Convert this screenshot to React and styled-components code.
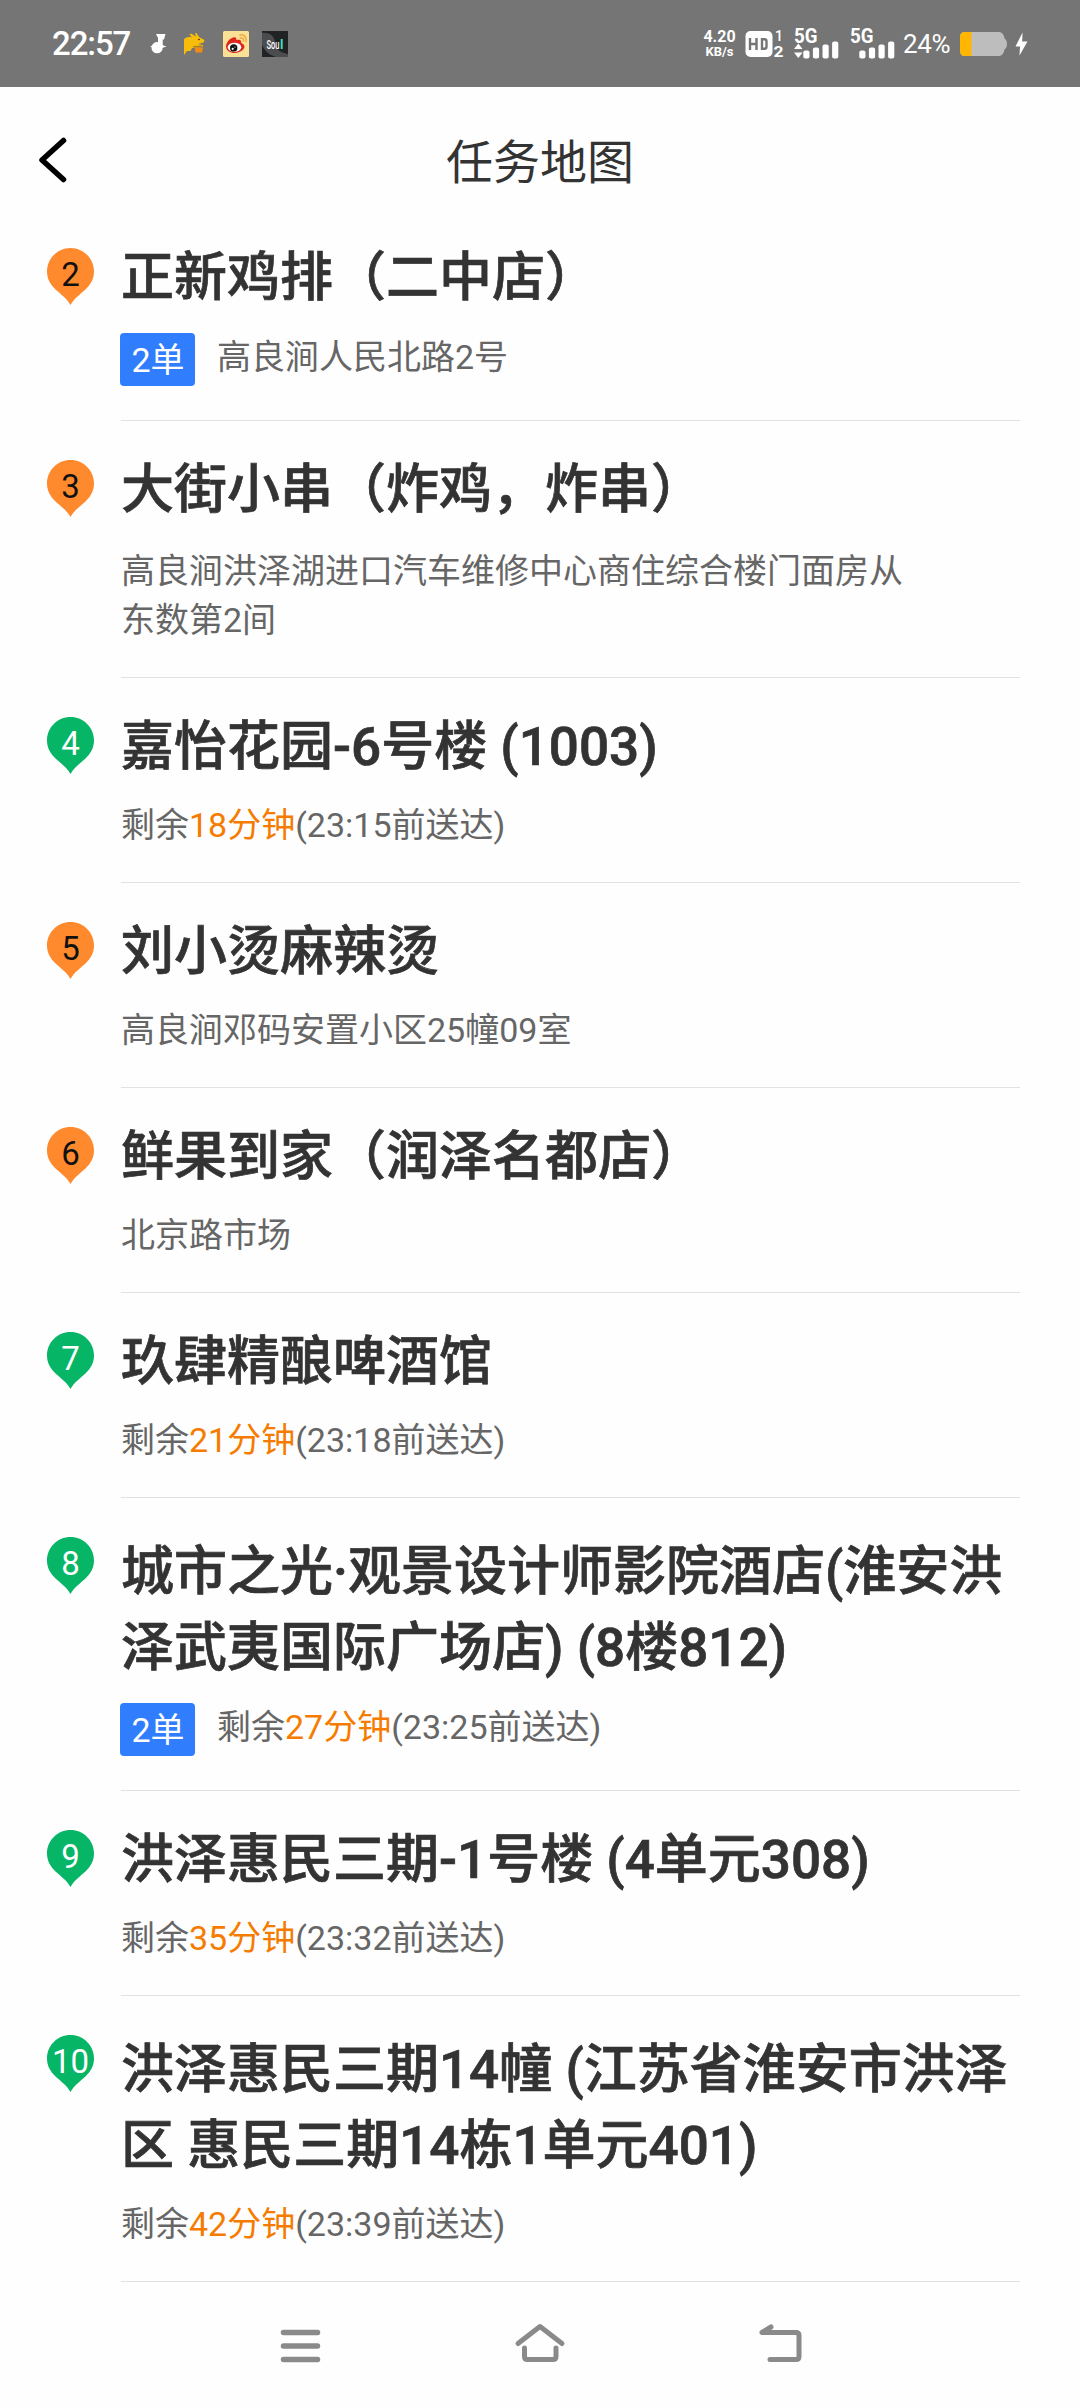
import React from 'react'
import styled, { createGlobalStyle } from 'styled-components';

const GlobalStyle = createGlobalStyle`
    body {
        margin: 0;
        background: #fefefe;
        font-family: Roboto, "Noto Sans CJK SC", sans-serif;
        color: #333;
    }
`;

const Screen = styled.div`
    width: 1080px;
    height: 2408px;
    display: flex;
    flex-direction: column;
    overflow: hidden;
`;

const StatusBar = styled.div`
    height: 87px;
    box-sizing: border-box;
    padding: 0 52px;
    display: flex;
    align-items: center;
    justify-content: space-between;
    background: #757575;
    color: #fff;
`;

const StatusGroup = styled.div`
    display: flex;
    align-items: center;
    gap: ${({gap}) => gap}px;
`;

const Clock = styled.span`
    width: 81px;
    font-size: 33px;
    font-weight: 500;
    line-height: 33px;
    letter-spacing: -1.1px;
`;

const Speed = styled.div`
    width: 35px;
    display: flex;
    flex-direction: column;
    align-items: center;
    font-size: 16px;
    font-weight: 700;
    line-height: 16px;
    & span:last-child {
        font-size: 13px;
        line-height: 13px;
    }
`;

const Percent = styled.span`
    width: 49px;
    font-size: 26px;
    line-height: 30px;
    letter-spacing: -0.3px;
`;

const Header = styled.header`
    height: 122px;
    display: grid;
    grid-template-columns: 120px 1fr 120px;
    align-items: center;
`;

const BackButton = styled.button`
    border: none;
    padding: 24px 0 0 37px;
    background: transparent;
    display: flex;
`;

const PageTitle = styled.h1`
    margin: 0;
    padding-top: 30px;
    text-align: center;
    font-size: 47px;
    font-weight: 400;
    line-height: 60px;
`;

const List = styled.ul`
    margin: 0;
    padding: 0;
    list-style: none;
    flex: 1;
`;

const Row = styled.li`
    display: flex;
    padding: 0 60px 0 47px;
`;

const PinWrap = styled.div`
    width: 47px;
    margin: 39px 27px 0 0;
    display: flex;
`;

const Body = styled.div`
    flex: 1;
    min-width: 0;
    height: ${({h}) => h}px;
    box-sizing: border-box;
    display: flex;
    flex-direction: column;
    padding-top: ${({wrapped}) => wrapped ? 36 : 34}px;
    border-bottom: 1px solid #e2e2e2;
`;

const Name = styled.h2`
    margin: 0;
    font-size: 53px;
    font-weight: 500;
    line-height: ${({wrapped}) => wrapped ? 76 : 70}px;
    word-break: break-all;
    -webkit-text-stroke: 0.7px #333;
`;

const Detail = styled.div`
    display: flex;
    align-items: flex-start;
    margin-top: ${({gap}) => gap}px;
`;

const Badge = styled.span`
    flex: none;
    width: 75px;
    height: 53px;
    box-sizing: border-box;
    padding-left: 1px;
    margin: 0 22px 0 -1px;
    border-radius: 4px;
    background: #307dfe;
    color: #fff;
    font-size: 34px;
    line-height: 54px;
    text-align: center;
`;

const Note = styled.p`
    margin: 0;
    max-width: 810px;
    color: #666;
    font-size: 34px;
    line-height: 49px;
`;

const Minutes = styled.span`
    color: #f57c00;
`;

const NavBar = styled.nav`
    height: 126px;
    box-sizing: border-box;
    padding-top: 1px;
    display: flex;
    align-items: center;
    justify-content: center;
    gap: 180px;
`;

const colors = {
    pickup: { fill: '#ff8a2e', text: '#111' },
    deliver: { fill: '#07b566', text: '#fff' },
};

const stops = [
    { no: 2, type: 'pickup', name: '正新鸡排（二中店）', orders: 2, address: '高良涧人民北路2号', h: 212, gap: 20 },
    { no: 3, type: 'pickup', name: '大街小串（炸鸡，炸串）', address: '高良涧洪泽湖进口汽车维修中心商住综合楼门面房从东数第2间', h: 257, gap: 22 },
    { no: 4, type: 'deliver', name: '嘉怡花园-6号楼 (1003)', left: 18, time: '23:15', h: 205, gap: 19 },
    { no: 5, type: 'pickup', name: '刘小烫麻辣烫', address: '高良涧邓码安置小区25幢09室', h: 205, gap: 19 },
    { no: 6, type: 'pickup', name: '鲜果到家（润泽名都店）', address: '北京路市场', h: 205, gap: 19 },
    { no: 7, type: 'deliver', name: '玖肆精酿啤酒馆', left: 21, time: '23:18', h: 205, gap: 19 },
    { no: 8, type: 'deliver', name: '城市之光·观景设计师影院酒店(淮安洪泽武夷国际广场店) (8楼812)', wrapped: true, orders: 2, left: 27, time: '23:25', h: 293, gap: 17 },
    { no: 9, type: 'deliver', name: '洪泽惠民三期-1号楼 (4单元308)', left: 35, time: '23:32', h: 205, gap: 19 },
    { no: 10, type: 'deliver', name: '洪泽惠民三期14幢 (江苏省淮安市洪泽区 惠民三期14栋1单元401)', wrapped: true, left: 42, time: '23:39', h: 286, gap: 16 },
];

const NoteIcon = () => (
    <svg width="17" height="20" viewBox="0 0 17 20" fill="#fff">
        <path d="M6 0H15.500L14 5.500H12.700V13.500A5.600 5.600 0 1 1 8 8.200V4Z" />
        <path d="M0 12.500L4 11V14ZM16.500 12.500L12 11V14Z" />
    </svg>
);

const KangarooIcon = () => (
    <svg width="22" height="22" viewBox="0 0 22 22">
        <path d="M0 22V6.500C2 4 5 3.500 8 4.500L5.500 1.500L7 .5L12 3.500L11 .5L12.500 0L15 4L20.500 7L19.500 9.500L14 11L19 12V14L8 15L6.500 18H3Z" fill="#f8bd0b" />
        <path d="M9 13L19 12.500L18 14L9.500 14.500Z" fill="#a5812a" />
        <path d="M10.500 14.500H19L18 19.500H11.500Z" fill="#f28b14" />
        <circle cx="15" cy="6.500" r=".8" fill="#222" />
    </svg>
);

const WeiboIcon = () => (
    <svg width="26" height="26" viewBox="0 0 26 26">
        <rect width="26" height="26" rx="1.500" fill="#fbe196" />
        <path d="M3 15.500C3 11 9 5 12.500 6.500C14 7.200 13 9 13.400 9.300C15 8.500 18 8.600 18.200 10.600C18.300 11.600 17.600 12 19 12.600C25 15.500 19 22 12 22C7 22 3 19.500 3 15.500Z" fill="#e1251b" />
        <ellipse cx="11.500" cy="16.300" rx="6.800" ry="4.600" fill="#fff" />
        <circle cx="10.700" cy="16.900" r="3.700" fill="#111" />
        <circle cx="9.700" cy="17.800" r="1.100" fill="#fff" />
        <circle cx="12" cy="16" r=".6" fill="#fff" />
        <path d="M17 4C21 3 24 6.500 23 10.500M17.300 7C19.500 6.500 20.800 8 20.400 10" fill="none" stroke="#f3a53f" strokeWidth="1.500" strokeLinecap="round" />
    </svg>
);

const SoulIcon = () => (
    <svg width="26" height="26" viewBox="0 0 26 26">
        <rect width="26" height="26" fill="#202223" />
        <path d="M0 2C7 1 13 5 13 12C14 19 18 21 26 23V26H14C7 24 2 19 0 14Z" fill="#4a4c4d" />
        <text x="4.500" y="18" fontSize="13" fontWeight="500" fill="#fff" textLength="13" lengthAdjust="spacingAndGlyphs">Sou</text>
        <text x="18" y="18" fontSize="13" fontWeight="700" fill="#3ddcc0">l</text>
    </svg>
);

const HdIcon = () => (
    <svg width="41" height="30" viewBox="0 0 41 30">
        <rect x=".5" y="2" width="27" height="26" rx="5" fill="#fff" />
        <path d="M5 9V21M11.500 9V21M5 15H11.500M17 10.200V19.800H19.500Q21.500 19.800 21.500 17.800V12.200Q21.500 10.200 19.500 10.200Z" fill="none" stroke="#757575" strokeWidth="2.400" />
        <text x="30" y="12" fontSize="14" fontWeight="500" fill="#fff">1</text>
        <text x="28.500" y="27.500" fontSize="14" fontWeight="700" fill="#fff" textLength="10" lengthAdjust="spacingAndGlyphs">2</text>
    </svg>
);

const Signal = ({arrows}) => (
    <svg width={arrows ? 48 : 45} height="40" viewBox={`0 0 ${arrows ? 48 : 45} 40`} fill="#fff">
        <text x="0" y="18.500" fontSize="20" fontWeight="700" textLength="23.500" lengthAdjust="spacingAndGlyphs">5G</text>
        {arrows && <path d="M0 25L4.300 19.500L8.600 25ZM0 28.500H8.600L4.300 34Z" />}
        {[8, 11, 14, 17].map((h, i) => (
            <rect key={h} x={9.3 + i * 9.6} y={34.5 - h} width="6.200" height={h} rx="2" />
        ))}
    </svg>
);

const BatteryIcon = () => (
    <svg width="47" height="24" viewBox="0 0 47 24">
        <path d="M5 0H39Q43.500 0 44.500 6.500Q47 8 47 12Q47 16 44.500 17.500Q43.500 24 39 24H5Q0 24 0 19V5Q0 0 5 0Z" fill="#bdbdbd" />
        <path d="M11.500 0H5Q0 0 0 5V19Q0 24 5 24H11.500Z" fill="#ffb600" />
    </svg>
);

const BoltIcon = () => (
    <svg width="13" height="24" viewBox="0 0 13 24" fill="#fff">
        <path d="M7.500 .5L.5 14.500H5L4.500 23.500L12.500 9.500H7.200Z" />
    </svg>
);

const Pin = ({no, type}) => (
    <svg width="47" height="59" viewBox="0 0 47 59">
        <path d="M23.500 0C36.500 0 47 10.500 47 23.500C47 31 43.500 36.500 38.500 41.500C33 46.500 27 50.500 23.500 57C20 50.500 14 46.500 8.500 41.500C3.500 36.500 0 31 0 23.500C0 10.500 10.500 0 23.500 0Z" fill={colors[type].fill} />
        <text x="23.500" y="37.500" fontSize="33" textAnchor="middle" fill={colors[type].text}>{no}</text>
    </svg>
);

const Stop = ({stop}) => (
    <Row>
        <PinWrap><Pin no={stop.no} type={stop.type} /></PinWrap>
        <Body h={stop.h} wrapped={stop.wrapped}>
            <Name wrapped={stop.wrapped}>{stop.name}</Name>
            <Detail gap={stop.gap}>
                {stop.orders && <Badge>{stop.orders}单</Badge>}
                {stop.address
                    ? <Note>{stop.address}</Note>
                    : <Note>剩余<Minutes>{stop.left}分钟</Minutes>({stop.time}前送达)</Note>}
            </Detail>
        </Body>
    </Row>
);

const App = () => (
    <Screen>
        <GlobalStyle />
        <StatusBar>
            <StatusGroup gap={13}>
                <StatusGroup gap={17}>
                    <Clock>22:57</Clock>
                    <NoteIcon />
                    <KangarooIcon />
                    <WeiboIcon />
                </StatusGroup>
                <SoulIcon />
            </StatusGroup>
            <StatusGroup gap={8}>
                <Speed><span>4.20</span><span>KB/s</span></Speed>
                <HdIcon />
                <Signal arrows />
                <Signal />
                <Percent>24%</Percent>
                <BatteryIcon />
                <BoltIcon />
            </StatusGroup>
        </StatusBar>
        <Header>
            <BackButton>
                <svg width="32" height="48" viewBox="0 0 32 48" fill="none" stroke="#000" strokeWidth="5.500" strokeLinecap="round" strokeLinejoin="round">
                    <path d="M26.500 4.500L5 24L26.500 43.500" />
                </svg>
            </BackButton>
            <PageTitle>任务地图</PageTitle>
        </Header>
        <List>
            {stops.map(stop => <Stop key={stop.no} stop={stop} />)}
        </List>
        <NavBar>
            <svg width="60" height="60" viewBox="0 0 60 60" fill="none" stroke="#8a8a8a" strokeWidth="5.500" strokeLinecap="round">
                <path d="M13.500 16.500H47.500M13.500 30H47.500M13.500 43.500H47.500" />
            </svg>
            <svg width="60" height="60" viewBox="0 0 60 60" fill="none" stroke="#8a8a8a" strokeWidth="5" strokeLinecap="round" strokeLinejoin="round">
                <path d="M8 27.500L30 10.500L52 27.500M14.500 32V40.500Q14.500 43.500 17.500 43.500H43Q46 43.500 46 40.500V32" />
            </svg>
            <svg width="60" height="60" viewBox="0 0 60 60" fill="none" stroke="#8a8a8a" strokeWidth="5" strokeLinecap="round" strokeLinejoin="round">
                <path d="M21 11L12 16.500H46Q49 16.500 49 19.500V40.500Q49 43.500 46 43.500H20" />
            </svg>
        </NavBar>
    </Screen>
);

export default App;
